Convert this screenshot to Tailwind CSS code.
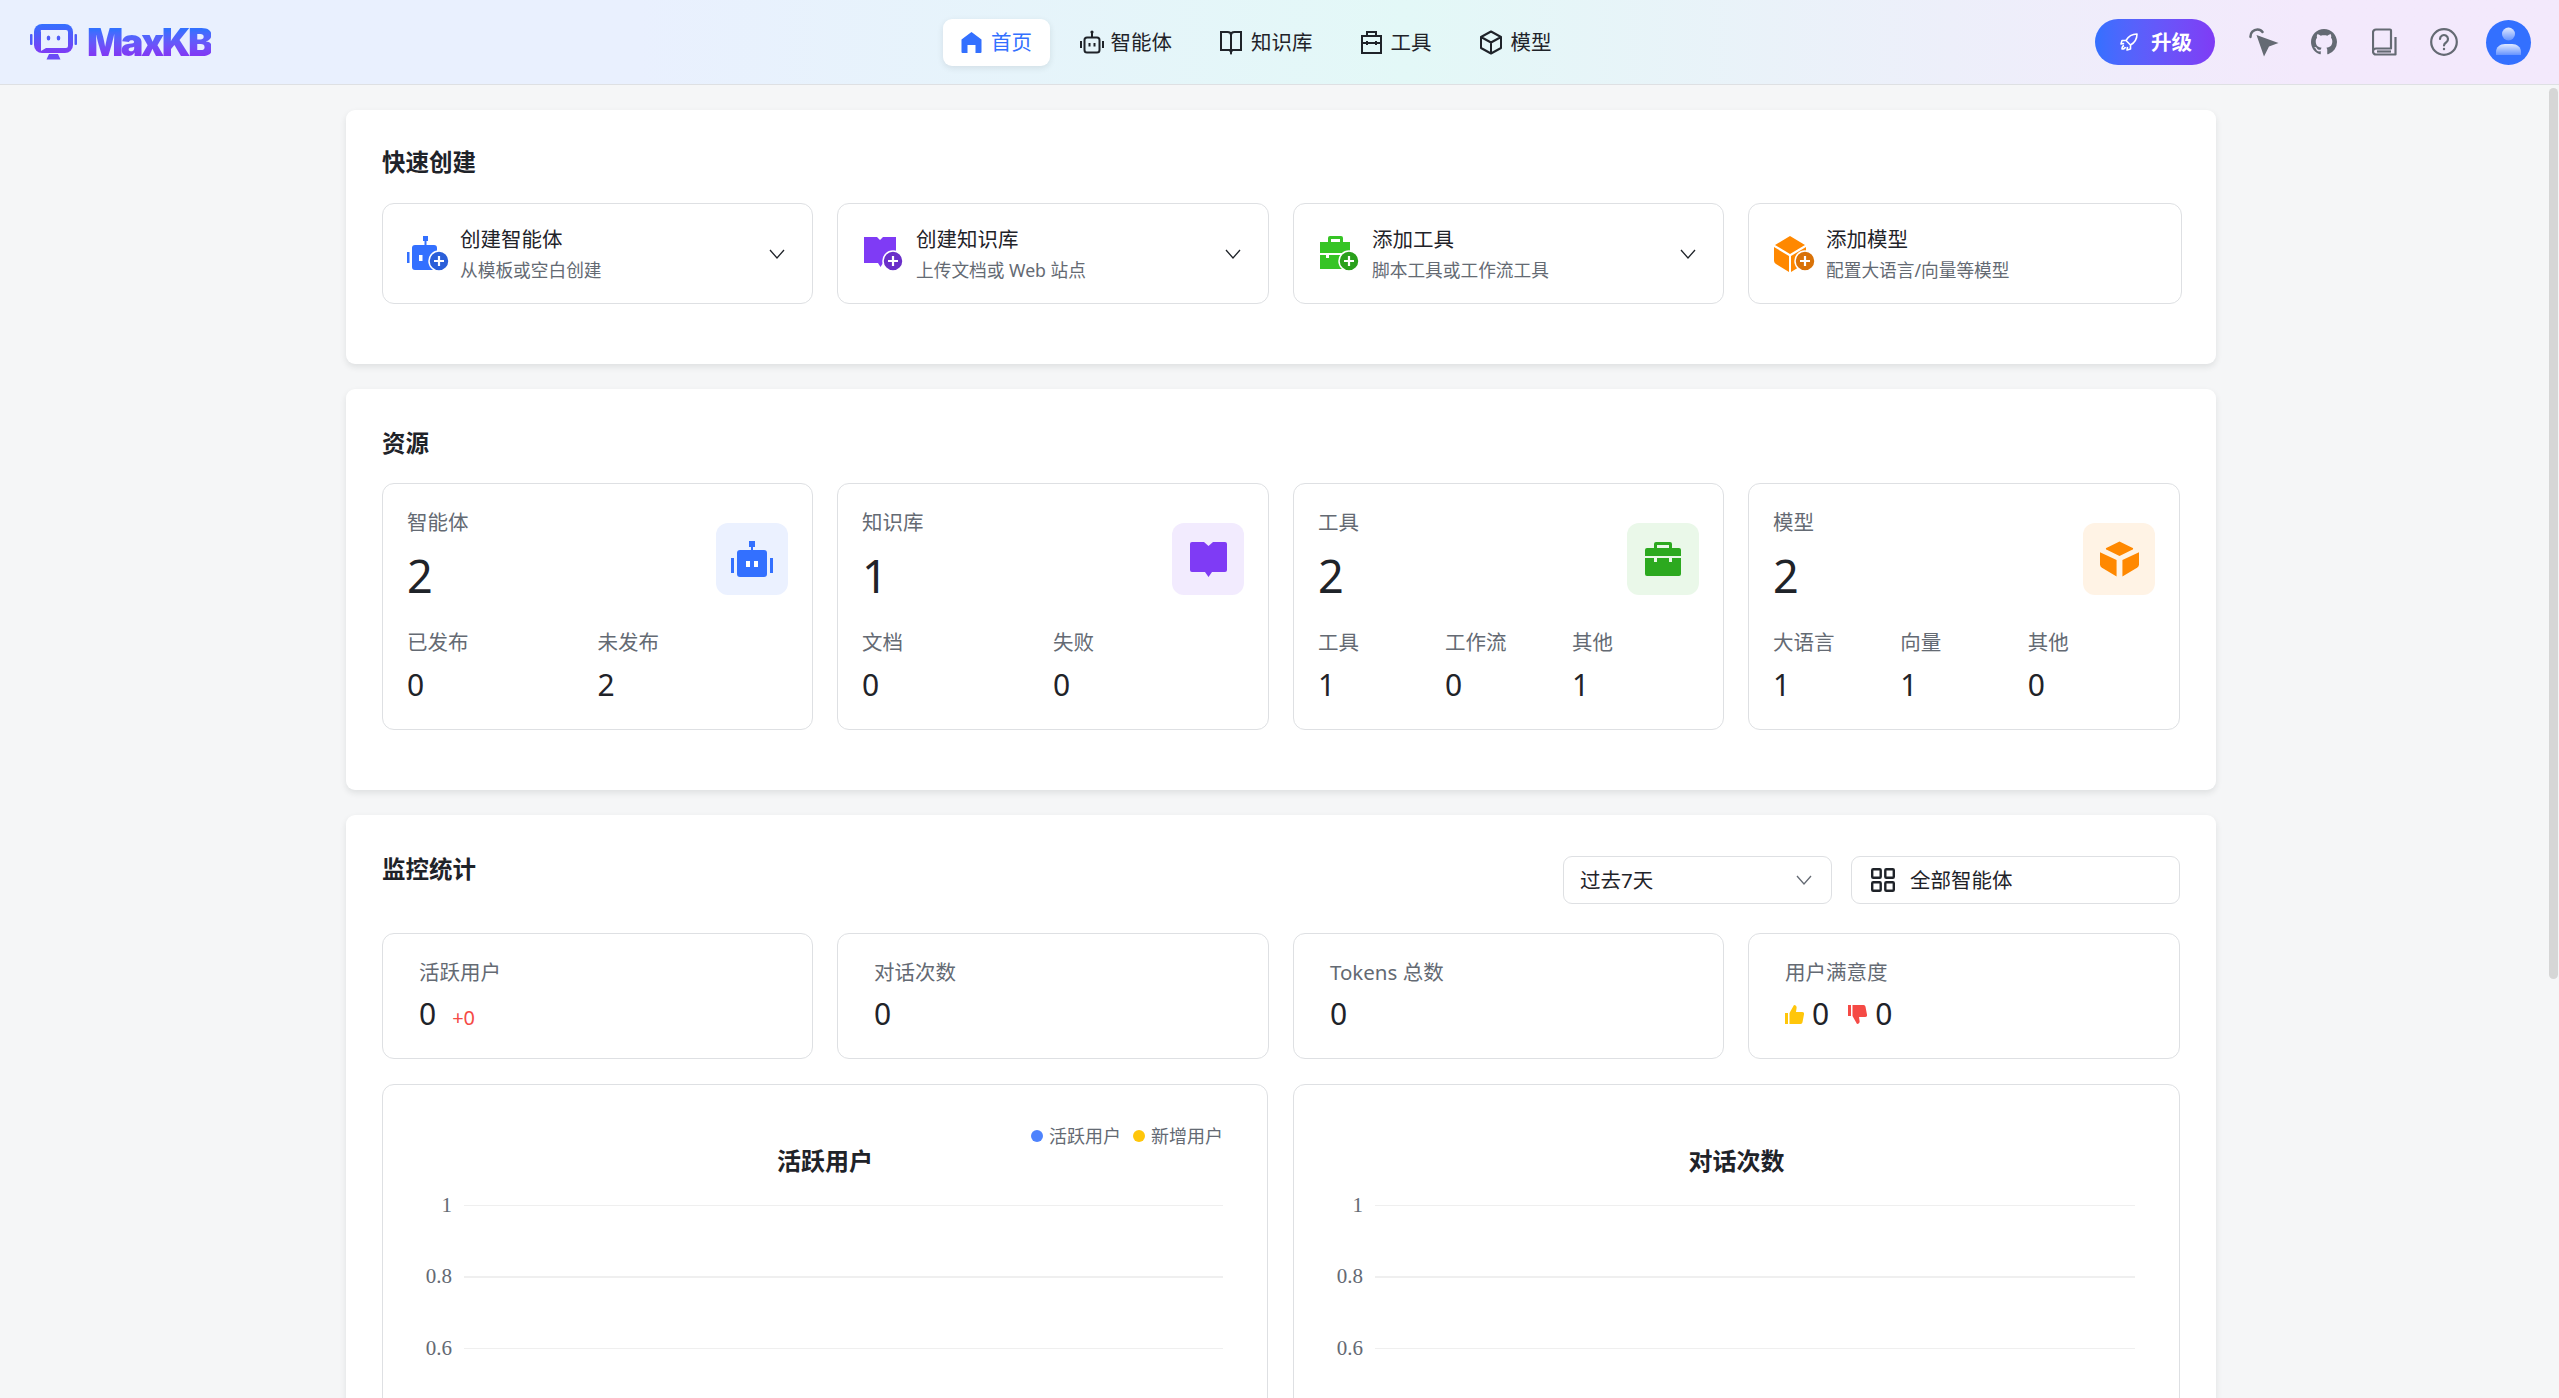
<!DOCTYPE html>
<html lang="zh-CN">
<head>
  <meta charset="UTF-8">
  <title>MaxKB</title>
  <script src="https://cdn.jsdelivr.net/npm/@tailwindcss/browser@4"></script>
</head>
<body class="relative h-screen overflow-hidden bg-[#f5f6f7] text-[#1f2329] font-['Noto_Sans','Noto_Sans_CJK_SC',sans-serif]">

  <!-- top bar -->
  <header class="flex items-center h-[85px] pl-[30px] pr-[28px] border-b border-[#dee0e3] bg-gradient-to-r from-[#e9f0fe] from-25% via-[#e3f8f7] via-55% to-[#f3e9fc] to-90%">
    <div class="flex items-center w-[182px] shrink-0">
      <svg class="w-[47px] h-[36px] shrink-0" viewBox="0 0 47 36">
        <defs>
          <linearGradient id="logoGrad" x1="0" y1="0" x2="0" y2="1">
            <stop offset="0" stop-color="#3370ff"/>
            <stop offset="1" stop-color="#7f3bf5"/>
          </linearGradient>
        </defs>
        <rect x="0" y="10" width="2.5" height="11" rx="1" fill="#4f5cf9"/>
        <rect x="44.5" y="10" width="2.5" height="11" rx="1" fill="#4f5cf9"/>
        <rect x="4" y="0" width="39" height="29" rx="8" fill="url(#logoGrad)"/>
        <path d="M11 6h25a2 2 0 0 1 2 2v14a2 2 0 0 1-2 2H16l-5 3V8a2 2 0 0 1 0-2z" fill="#e9f0fe"/>
        <ellipse cx="18.5" cy="14" rx="1.8" ry="2.6" fill="#4f5cf9"/>
        <ellipse cx="28.5" cy="14" rx="1.8" ry="2.6" fill="#4f5cf9"/>
        <path d="M19 30h9l2.5 5.5h-14z" fill="#6a4cf6"/>
      </svg>
      <span class="ml-[10px] text-[38px] leading-[40px] font-black tracking-[-2.5px] bg-gradient-to-b from-[#3370ff] from-20% to-[#7f3bf5] to-80% bg-clip-text text-transparent font-['Inter',sans-serif]">MaxKB</span>
    </div>

    <nav class="flex items-center gap-[12px] ml-[731px] text-[20.5px] leading-[30px]">
      <a class="flex items-center gap-[9px] h-[47px] px-[18px] rounded-[9px] bg-white text-[#3370ff] shadow-[0_2px_6px_rgba(31,35,41,0.1)]">
        <svg class="w-[21px] h-[24px]" viewBox="0 0 21 24" fill="#3370ff"><path d="M10.5 2 20.5 9.5V22a1 1 0 0 1-1 1h-5v-8h-8v8h-5a1 1 0 0 1-1-1V9.5z"/></svg>
        <span>首页</span>
      </a>
      <a class="flex items-center gap-[9px] h-[47px] px-[18px] ml-[1.5px]">
        <svg class="w-[24px] h-[27px] -mx-[2px]" viewBox="0 0 24 27" fill="none" stroke="#1f2329" stroke-width="2"><circle cx="12" cy="3" r="1.6" fill="#1f2329" stroke="none"/><path d="M12 4v4"/><rect x="4.5" y="8.5" width="15" height="15" rx="2.5"/><rect x="0" y="12" width="2" height="7" fill="#1f2329" stroke="none"/><rect x="22" y="12" width="2" height="7" fill="#1f2329" stroke="none"/><rect x="8.5" y="14" width="2" height="3.5" fill="#1f2329" stroke="none"/><rect x="13.5" y="14" width="2" height="3.5" fill="#1f2329" stroke="none"/></svg>
        <span>智能体</span>
      </a>
      <a class="flex items-center gap-[9px] h-[47px] px-[18px]">
        <svg class="w-[22px] h-[26px]" viewBox="0 0 22 26" fill="none" stroke="#1f2329" stroke-width="2"><path d="M1 3h6.5c2 0 3.5 1.2 3.5 3v17l-1.5-2H1zM21 3h-6.500c-2 0-3.500 1.200-3.500 3v17l1.500-2H21z"/></svg>
        <span>知识库</span>
      </a>
      <a class="flex items-center gap-[9px] h-[47px] px-[18px]">
        <svg class="w-[21px] h-[25px]" viewBox="0 0 21 25" fill="none" stroke="#1f2329" stroke-width="2"><path d="M6 6V2h9v4"/><rect x="1" y="6" width="19" height="17"/><path d="M1 13h19M6 11v4M15 11v4"/></svg>
        <span>工具</span>
      </a>
      <a class="flex items-center gap-[9px] h-[47px] px-[18px]">
        <svg class="w-[22px] h-[25px]" viewBox="0 0 22 25" fill="none" stroke="#1f2329" stroke-width="2" stroke-linejoin="round"><path d="M11 1.500 21 7v11l-10 5.500L1 18V7zM1 7l10 5.500L21 7M11 12.500v11"/></svg>
        <span>模型</span>
      </a>
    </nav>

    <div class="flex items-center ml-auto">
      <button class="flex items-center gap-[13px] w-[120px] h-[46px] pl-[25px] rounded-full text-white text-[20.5px] font-semibold bg-gradient-to-r from-[#3370ff] to-[#7f3bf5]">
        <svg class="w-[18px] h-[18px]" viewBox="0 0 18 18" fill="none" stroke="#fff" stroke-width="1.6" stroke-linejoin="round"><path d="M17 1c-5 0-8.500 2-11 6.500L10.500 12C15 9.500 17 6 17 1zM6 7.500H2L1 11l3.200-.5M10.500 12v4L7 17l.5-3.200M4 12.500c-1.500.5-2 2-2 3.500 1.500 0 3-.5 3.500-2"/></svg>
        <span>升级</span>
      </button>
      <svg class="ml-[34px] w-[30px] h-[30px]" viewBox="0 0 30 30" fill="none"><path d="M1.500 10a7 7 0 0 1 7-7.500c2.500 0 4 1 5 2.500" stroke="#646a73" stroke-width="2.500" stroke-linecap="round"/><path d="M7.500 8 29.500 16l-9.500 3.500L15 29.500z" fill="#646a73"/></svg>
      <svg class="ml-[32px] w-[26px] h-[26px]" viewBox="0 0 16 16" fill="#646a73"><path d="M8 0C3.580 0 0 3.580 0 8c0 3.540 2.290 6.530 5.470 7.590.4.070.55-.17.55-.38 0-.19-.01-.82-.01-1.490-2.010.37-2.530-.49-2.690-.94-.09-.23-.48-.94-.82-1.130-.28-.15-.68-.52-.01-.53.63-.01 1.080.58 1.230.82.720 1.210 1.870.87 2.330.66.070-.52.280-.87.510-1.070-1.780-.2-3.640-.89-3.640-3.950 0-.87.310-1.590.82-2.150-.08-.2-.36-1.020.08-2.120 0 0 .67-.21 2.200.82.640-.18 1.320-.27 2-.27.680 0 1.360.09 2 .27 1.530-1.040 2.200-.82 2.200-.82.440 1.100.160 1.920.080 2.120.510.560.820 1.270.820 2.150 0 3.070-1.870 3.750-3.650 3.950.290.250.540.730.540 1.480 0 1.070-.01 1.930-.01 2.200 0 .210.150.460.550.380A8.013 8.013 0 0 0 16 8c0-4.420-3.580-8-8-8z"/></svg>
      <svg class="ml-[35px] w-[25px] h-[28px]" viewBox="0 0 25 28" fill="none" stroke="#646a73" stroke-width="2.200" stroke-linejoin="round"><path d="M4 1.500h14a1 1 0 0 1 1 1v18H4a3 3 0 0 0-3 3v-19a3 3 0 0 1 3-3zM1 23.500a3 3 0 0 0 3 3h19.500V9"/><path d="M5 23.500h14"/></svg>
      <svg class="ml-[33px] w-[28px] h-[28px]" viewBox="0 0 28 28" fill="none" stroke="#646a73" stroke-width="2.200" stroke-linecap="round"><circle cx="14" cy="14" r="12.800"/><path d="M10 11a4 4 0 1 1 6.300 3.300c-1.400.9-2.300 1.600-2.300 3.200"/><circle cx="14" cy="21" r="1.200" fill="#646a73" stroke="none"/></svg>
      <div class="ml-[28px] w-[45px] h-[45px] rounded-full bg-[#3370ff] overflow-hidden">
        <svg class="w-[45px] h-[45px]" viewBox="0 0 45 45">
          <defs>
            <linearGradient id="avatarGrad" x1="0" y1="0" x2="0" y2="1">
              <stop offset="0" stop-color="#fff" stop-opacity="0.85"/>
              <stop offset="1" stop-color="#fff" stop-opacity="0.25"/>
            </linearGradient>
          </defs>
          <circle cx="22.500" cy="14" r="6.500" fill="url(#avatarGrad)"/>
          <path d="M10 35v-3c0-5 4-8 9-8h7c5 0 9 3 9 8v3z" fill="url(#avatarGrad)"/>
        </svg>
      </div>
    </div>
  </header>

  <main class="w-[1870px] ml-[346px] pt-[25px] flex flex-col gap-[25px]">

    <!-- quick create -->
    <section class="bg-white rounded-[9px] shadow-[0_3px_6px_rgba(31,35,41,0.1)] p-[36px] pb-[60px]">
      <h2 class="text-[23.5px] leading-[36px] font-bold -mt-[2px] mb-[23px]">快速创建</h2>
      <div class="grid grid-cols-[431px_432px_431px_434px] gap-[24px]">
        <div class="flex items-center h-[101px] pl-[24px] pr-[27px] bg-white rounded-[12px] border border-[#dee0e3]">
          <svg class="w-[42px] h-[36px] shrink-0" viewBox="0 0 42 36"><path d="M16 0h5v5h-1.500v4H27a3 3 0 0 1 3 3v19a3 3 0 0 1-3 3H8a3 3 0 0 1-3-3V12a3 3 0 0 1 3-3h9.500V5H16zM0 16h2.500v11H0z" fill="#3370ff"/><rect x="12" y="19" width="3.500" height="6" fill="#fff"/><circle cx="32" cy="25" r="10" fill="#2b5fd9" stroke="#fff" stroke-width="1.500"/><path d="M32 20v10M27 25h10" stroke="#fff" stroke-width="2.200"/></svg>
          <div class="ml-[11px] flex-1">
            <p class="text-[20.5px] leading-[30px]">创建智能体</p>
            <p class="text-[17.7px] leading-[27px] mt-[3px] text-[#646a73]">从模板或空白创建</p>
          </div>
          <svg class="w-[16px] h-[10px]" viewBox="0 0 16 10" fill="none" stroke="#1f2329" stroke-width="1.300"><path d="M1 1l7 8 7-8"/></svg>
        </div>
        <div class="flex items-center h-[101px] pl-[26px] pr-[27px] bg-white rounded-[12px] border border-[#dee0e3]">
          <svg class="w-[41px] h-[36px] shrink-0" viewBox="0 0 41 36"><path d="M0 1h13l3 3 3-3h13v26H19l-2.500 4-2.500-4H0z" fill="#7f3bf5"/><circle cx="29" cy="25" r="10" fill="#6a2fc9" stroke="#fff" stroke-width="1.500"/><path d="M29 20v10M24 25h10" stroke="#fff" stroke-width="2.200"/></svg>
          <div class="ml-[11px] flex-1">
            <p class="text-[20.5px] leading-[30px]">创建知识库</p>
            <p class="text-[17.7px] leading-[27px] mt-[3px] text-[#646a73]">上传文档或 Web 站点</p>
          </div>
          <svg class="w-[16px] h-[10px]" viewBox="0 0 16 10" fill="none" stroke="#1f2329" stroke-width="1.300"><path d="M1 1l7 8 7-8"/></svg>
        </div>
        <div class="flex items-center h-[101px] pl-[26px] pr-[27px] bg-white rounded-[12px] border border-[#dee0e3]">
          <svg class="w-[40px] h-[36px] shrink-0" viewBox="0 0 40 36"><path d="M8 6V2a2 2 0 0 1 2-2h11a2 2 0 0 1 2 2v4h7v11H0V6zM11 3v3h9V3zM0 19h6v3h3v-3h12v3h3v-3h6v14H0z" fill="#36c425"/><circle cx="29" cy="25" r="10" fill="#2aa01c" stroke="#fff" stroke-width="1.500"/><path d="M29 20v10M24 25h10" stroke="#fff" stroke-width="2.200"/></svg>
          <div class="ml-[12px] flex-1">
            <p class="text-[20.5px] leading-[30px]">添加工具</p>
            <p class="text-[17.7px] leading-[27px] mt-[3px] text-[#646a73]">脚本工具或工作流工具</p>
          </div>
          <svg class="w-[16px] h-[10px]" viewBox="0 0 16 10" fill="none" stroke="#1f2329" stroke-width="1.300"><path d="M1 1l7 8 7-8"/></svg>
        </div>
        <div class="flex items-center h-[101px] pl-[25px] pr-[27px] bg-white rounded-[12px] border border-[#dee0e3]">
          <svg class="w-[41px] h-[36px] shrink-0" viewBox="0 0 41 36"><path d="M16 0l15 9-15 9-15-9zM0 11l15 9v16L2 28a4 4 0 0 1-2-3zM32 11l-15 9v16l13-8a4 4 0 0 0 2-3z" fill="#ff8800"/><circle cx="31" cy="25" r="10" fill="#d97208" stroke="#fff" stroke-width="1.500"/><path d="M31 20v10M26 25h10" stroke="#fff" stroke-width="2.200"/></svg>
          <div class="ml-[11px] flex-1">
            <p class="text-[20.5px] leading-[30px]">添加模型</p>
            <p class="text-[17.7px] leading-[27px] mt-[3px] text-[#646a73]">配置大语言/向量等模型</p>
          </div>
        </div>
      </div>
    </section>

    <!-- resources -->
    <section class="bg-white rounded-[9px] shadow-[0_3px_6px_rgba(31,35,41,0.1)] p-[36px] pb-[60px]">
      <h2 class="text-[23.5px] leading-[36px] font-bold mb-[22px]">资源</h2>
      <div class="grid grid-cols-[431px_432px_431px_432px] gap-[24px]">

        <div class="h-[247px] rounded-[12px] border border-[#dee0e3] p-[24px]">
          <div class="flex justify-between">
            <div>
              <p class="text-[20.5px] leading-[30px] -mt-[1px] text-[#646a73]">智能体</p>
              <p class="text-[45px] leading-[60px] mt-[9px]">2</p>
            </div>
            <div class="flex items-center justify-center w-[72px] h-[72px] mt-[15px] rounded-[12px] bg-[#ebf1ff]">
              <svg class="w-[42px] h-[36px]" viewBox="0 0 42 36" fill="#3370ff"><path d="M18 0h6v6h-2v3h11a3 3 0 0 1 3 3v21a3 3 0 0 1-3 3H9a3 3 0 0 1-3-3V12a3 3 0 0 1 3-3h11V6h-2zM0 17h3v15H0zM39 17h3v15h-3z"/><rect x="15" y="20" width="4" height="6" fill="#fff"/><rect x="23" y="20" width="4" height="6" fill="#fff"/></svg>
            </div>
          </div>
          <div class="grid grid-cols-2 mt-[21px]">
            <div><p class="text-[20.5px] leading-[30px] text-[#646a73]">已发布</p><p class="text-[30px] leading-[40px] mt-[8px]">0</p></div>
            <div><p class="text-[20.5px] leading-[30px] text-[#646a73]">未发布</p><p class="text-[30px] leading-[40px] mt-[8px]">2</p></div>
          </div>
        </div>

        <div class="h-[247px] rounded-[12px] border border-[#dee0e3] p-[24px]">
          <div class="flex justify-between">
            <div>
              <p class="text-[20.5px] leading-[30px] -mt-[1px] text-[#646a73]">知识库</p>
              <p class="text-[45px] leading-[60px] mt-[9px]">1</p>
            </div>
            <div class="flex items-center justify-center w-[72px] h-[72px] mt-[15px] rounded-[12px] bg-[#f2ebfe]">
              <svg class="w-[37px] h-[36px]" viewBox="0 0 37 36" fill="#7f3bf5"><path d="M2 1h12l4.500 4L23 1h12a2 2 0 0 1 2 2v26a2 2 0 0 1-2 2H22l-3.500 5-3.500-5H2a2 2 0 0 1-2-2V3a2 2 0 0 1 2-2z"/></svg>
            </div>
          </div>
          <div class="grid grid-cols-2 mt-[21px]">
            <div><p class="text-[20.5px] leading-[30px] text-[#646a73]">文档</p><p class="text-[30px] leading-[40px] mt-[8px]">0</p></div>
            <div><p class="text-[20.5px] leading-[30px] text-[#646a73]">失败</p><p class="text-[30px] leading-[40px] mt-[8px]">0</p></div>
          </div>
        </div>

        <div class="h-[247px] rounded-[12px] border border-[#dee0e3] p-[24px]">
          <div class="flex justify-between">
            <div>
              <p class="text-[20.5px] leading-[30px] -mt-[1px] text-[#646a73]">工具</p>
              <p class="text-[45px] leading-[60px] mt-[9px]">2</p>
            </div>
            <div class="flex items-center justify-center w-[72px] h-[72px] mt-[15px] rounded-[12px] bg-[#eaf8e9]">
              <svg class="w-[36px] h-[34px]" viewBox="0 0 36 34" fill="#2ca91f"><path d="M9 6V2a2 2 0 0 1 2-2h14a2 2 0 0 1 2 2v4h7a2 2 0 0 1 2 2v6H0V8a2 2 0 0 1 2-2zM12 3v3h12V3zM0 16h9v4h3v-4h12v4h3v-4h9v16a2 2 0 0 1-2 2H2a2 2 0 0 1-2-2z"/></svg>
            </div>
          </div>
          <div class="grid grid-cols-3 mt-[21px]">
            <div><p class="text-[20.5px] leading-[30px] text-[#646a73]">工具</p><p class="text-[30px] leading-[40px] mt-[8px]">1</p></div>
            <div><p class="text-[20.5px] leading-[30px] text-[#646a73]">工作流</p><p class="text-[30px] leading-[40px] mt-[8px]">0</p></div>
            <div><p class="text-[20.5px] leading-[30px] text-[#646a73]">其他</p><p class="text-[30px] leading-[40px] mt-[8px]">1</p></div>
          </div>
        </div>

        <div class="h-[247px] rounded-[12px] border border-[#dee0e3] p-[24px]">
          <div class="flex justify-between">
            <div>
              <p class="text-[20.5px] leading-[30px] -mt-[1px] text-[#646a73]">模型</p>
              <p class="text-[45px] leading-[60px] mt-[9px]">2</p>
            </div>
            <div class="flex items-center justify-center w-[72px] h-[72px] mt-[15px] rounded-[12px] bg-[#fff3e5]">
              <svg class="w-[39px] h-[36px]" viewBox="0 0 40 36" fill="#ff8800"><path d="M20 0l13 6.500a1 1 0 0 1 0 2L20 15 7 8.500a1 1 0 0 1 0-2zM0 11l17 8v17L2 27a4 4 0 0 1-2-3zM40 11 23 19v17l15-9a4 4 0 0 0 2-3z"/></svg>
            </div>
          </div>
          <div class="grid grid-cols-3 mt-[21px]">
            <div><p class="text-[20.5px] leading-[30px] text-[#646a73]">大语言</p><p class="text-[30px] leading-[40px] mt-[8px]">1</p></div>
            <div><p class="text-[20.5px] leading-[30px] text-[#646a73]">向量</p><p class="text-[30px] leading-[40px] mt-[8px]">1</p></div>
            <div><p class="text-[20.5px] leading-[30px] text-[#646a73]">其他</p><p class="text-[30px] leading-[40px] mt-[8px]">0</p></div>
          </div>
        </div>
      </div>
    </section>

    <!-- monitoring -->
    <section class="bg-white rounded-[9px] shadow-[0_3px_6px_rgba(31,35,41,0.1)] p-[36px]">
      <div class="flex items-start justify-between h-[82px]">
        <h2 class="text-[23.5px] leading-[36px] font-bold">监控统计</h2>
        <div class="flex gap-[19px] mt-[5px] text-[20.5px]">
          <div class="flex items-center justify-between w-[269px] h-[48px] pl-[16px] pr-[19px] rounded-[9px] border border-[#dee0e3]">
            <span>过去7天</span>
            <svg class="w-[16px] h-[10px]" viewBox="0 0 16 10" fill="none" stroke="#646a73" stroke-width="1.300"><path d="M1 1l7 8 7-8"/></svg>
          </div>
          <div class="flex items-center w-[329px] h-[48px] pl-[19px] rounded-[9px] border border-[#dee0e3]">
            <svg class="w-[24px] h-[24px]" viewBox="0 0 24 24" fill="none" stroke="#1f2329" stroke-width="2.400"><rect x="1.200" y="1.200" width="8.500" height="8.500" rx="1"/><rect x="14.300" y="1.200" width="8.500" height="8.500" rx="1"/><rect x="1.200" y="14.300" width="8.500" height="8.500" rx="1"/><rect x="14.300" y="14.300" width="8.500" height="8.500" rx="1"/></svg>
            <span class="ml-[15px]">全部智能体</span>
          </div>
        </div>
      </div>

      <div class="grid grid-cols-[431px_432px_431px_432px] gap-[24px]">
        <div class="h-[126px] rounded-[12px] border border-[#dee0e3] pl-[36px] pt-[23px]">
          <p class="text-[20.5px] leading-[30px] text-[#646a73]">活跃用户</p>
          <p class="flex items-baseline mt-[7px] text-[30px] leading-[40px]">0<span class="ml-[16px] text-[20px] text-[#f54a45]">+0</span></p>
        </div>
        <div class="h-[126px] rounded-[12px] border border-[#dee0e3] pl-[36px] pt-[23px]">
          <p class="text-[20.5px] leading-[30px] text-[#646a73]">对话次数</p>
          <p class="mt-[7px] text-[30px] leading-[40px]">0</p>
        </div>
        <div class="h-[126px] rounded-[12px] border border-[#dee0e3] pl-[36px] pt-[23px]">
          <p class="text-[20.5px] leading-[30px] text-[#646a73]">Tokens 总数</p>
          <p class="mt-[7px] text-[30px] leading-[40px]">0</p>
        </div>
        <div class="h-[126px] rounded-[12px] border border-[#dee0e3] pl-[36px] pt-[23px]">
          <p class="text-[20.5px] leading-[30px] text-[#646a73]">用户满意度</p>
          <div class="flex items-center mt-[7px] text-[30px] leading-[40px]">
            <svg class="w-[19px] h-[19px]" viewBox="0 0 19 19" fill="#ffc60a"><path d="M0 8h3v11H0zM4.500 8 9 0c2 0 3 1.500 2.500 3.500L11 7h6a2 2 0 0 1 2 2.300l-1.500 8A2 2 0 0 1 15.500 19h-11z"/></svg>
            <span class="ml-[8px]">0</span>
            <svg class="ml-[19px] w-[19px] h-[19px]" viewBox="0 0 19 19" fill="#f54a45"><path d="M0 0h3v11H0zM4.500 11 9 19c2 0 3-1.500 2.500-3.500L11 12h6a2 2 0 0 0 2-2.300l-1.500-8A2 2 0 0 0 15.500 0h-11z"/></svg>
            <span class="ml-[8px]">0</span>
          </div>
        </div>
      </div>

      <div class="grid grid-cols-[886px_887px] gap-[25px] w-[1798px] mt-[25px]">
        <div class="h-[400px] rounded-t-[12px] border border-[#dee0e3] pl-[1px] pr-[44px] pt-[39px]">
          <div class="flex justify-end items-center h-[24px] text-[18px] leading-[24px] text-[#646a73]">
            <i class="w-[12px] h-[12px] rounded-full bg-[#4e83fd]"></i><span class="ml-[6px]">活跃用户</span>
            <i class="ml-[12px] w-[12px] h-[12px] rounded-full bg-[#ffc60a]"></i><span class="ml-[6px]">新增用户</span>
          </div>
          <p class="-mr-[43px] text-center text-[24px] leading-[36px] font-bold -mt-[5px]">活跃用户</p>
          <div class="mt-[26.5px] flex flex-col text-[21px] text-[#646a73] font-['Liberation_Serif',serif]">
            <div class="flex items-center h-[71.5px] -mt-[35.750px]"><span class="w-[68px] text-right">1</span><i class="ml-[12px] flex-1 h-[1.500px] bg-[#efefef]"></i></div>
            <div class="flex items-center h-[71.5px]"><span class="w-[68px] text-right">0.8</span><i class="ml-[12px] flex-1 h-[1.500px] bg-[#efefef]"></i></div>
            <div class="flex items-center h-[71.5px]"><span class="w-[68px] text-right">0.6</span><i class="ml-[12px] flex-1 h-[1.500px] bg-[#efefef]"></i></div>
          </div>
        </div>
        <div class="h-[400px] rounded-t-[12px] border border-[#dee0e3] pl-[1px] pr-[44px] pt-[58px]">
          <p class="-mr-[43px] text-center text-[24px] leading-[36px] font-bold">对话次数</p>
          <div class="mt-[26.5px] flex flex-col text-[21px] text-[#646a73] font-['Liberation_Serif',serif]">
            <div class="flex items-center h-[71.5px] -mt-[35.750px]"><span class="w-[68px] text-right">1</span><i class="ml-[12px] flex-1 h-[1.500px] bg-[#efefef]"></i></div>
            <div class="flex items-center h-[71.5px]"><span class="w-[68px] text-right">0.8</span><i class="ml-[12px] flex-1 h-[1.500px] bg-[#efefef]"></i></div>
            <div class="flex items-center h-[71.5px]"><span class="w-[68px] text-right">0.6</span><i class="ml-[12px] flex-1 h-[1.500px] bg-[#efefef]"></i></div>
          </div>
        </div>
      </div>
    </section>
  </main>

  <!-- overlay scrollbar -->
  <div class="absolute top-[88px] right-[1px] w-[9px] h-[891px] rounded-full bg-[#d6d6d6]"></div>
</body>
</html>
